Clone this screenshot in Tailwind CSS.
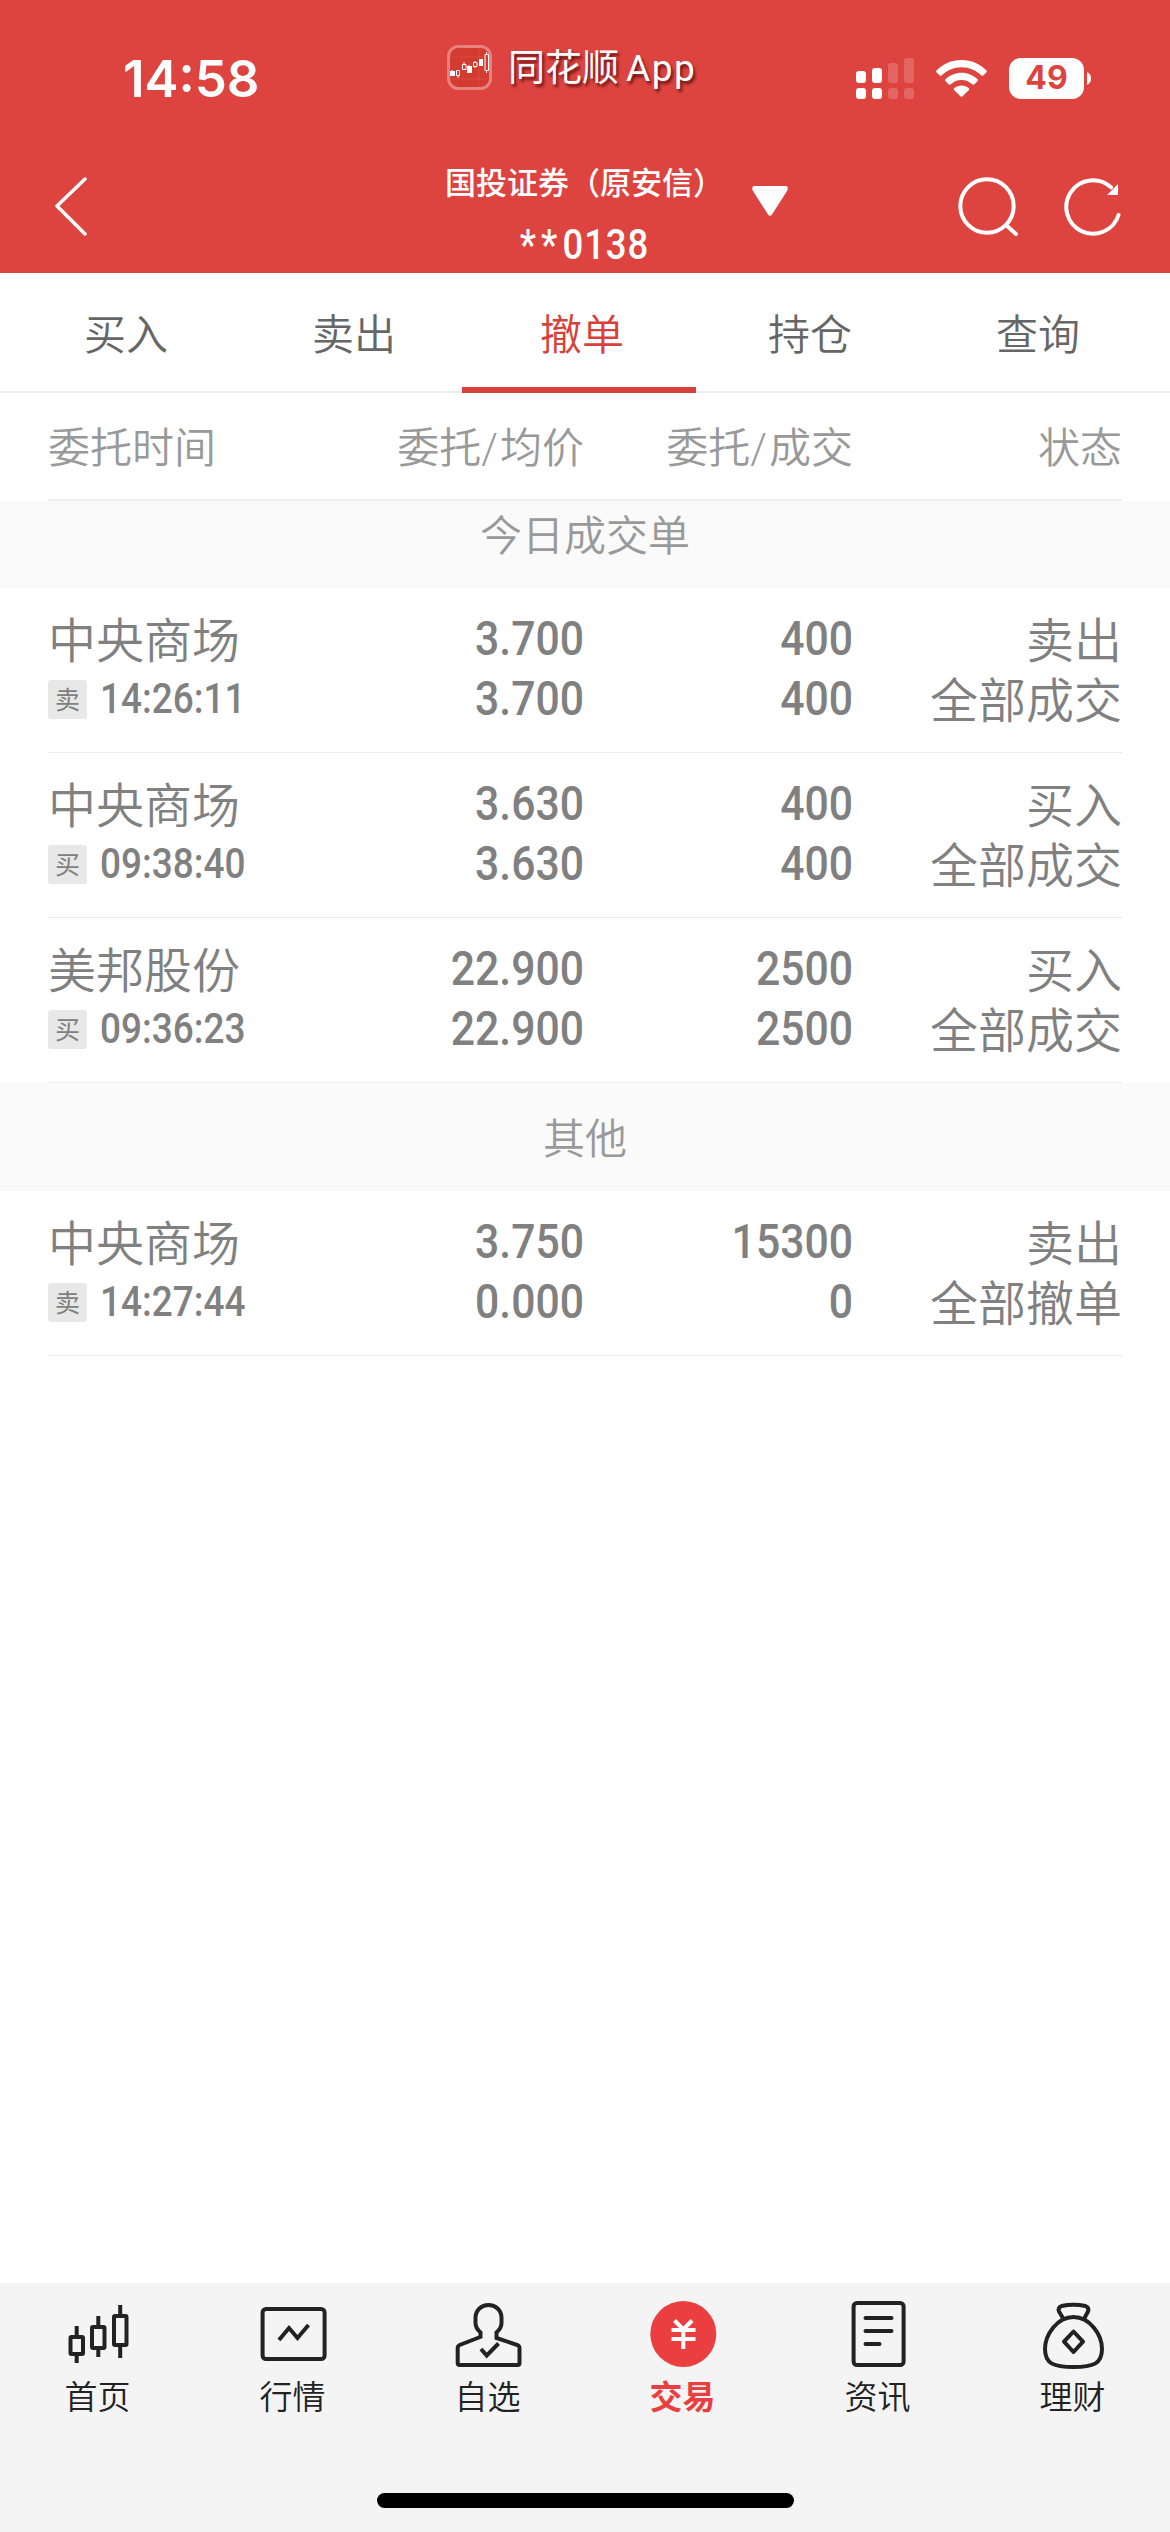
<!DOCTYPE html>
<html lang="zh-CN">
<head>
    <meta charset="UTF-8">
    <meta name="viewport" content="width=device-width, initial-scale=1.0">
    <title>撤单</title>
    <script src="https://cdn.jsdelivr.net/npm/@tailwindcss/browser@4"></script>
</head>
<body class="bg-white font-['Roboto','Noto_Sans_CJK_SC',sans-serif]">
    <div class="w-[1170px] h-[2532px] flex flex-col overflow-hidden">

        <!-- Header -->
        <header class="h-[273px] shrink-0 bg-[#dd4440] text-white flex flex-col">
            <!-- Status bar -->
            <div class="h-[156px] flex items-center pl-[123px] pr-[79px]">
                <div class="w-[324px] text-[51px] leading-none font-semibold font-['Inter',sans-serif]">14:58</div>
                <div class="flex items-center gap-[16px] -mt-[21px] w-[340px]">
                    <svg class="w-[45px] h-[45px]" viewBox="0 0 45 45" fill="none">
                        <rect x="1.5" y="1.5" width="42" height="42" rx="10" fill="#d33a30" stroke="#e8807c" stroke-width="3"/>
                        <path d="M3 12H42M3 34H42M32 3V42" stroke="#dc5048" stroke-width="0.7"/>
                        <g fill="#fff">
                            <path d="M3 26h5v5H3zM20 21h5v7H20zM32 14h4v7H32z"/>
                            <path d="M5 25v1M11 31v2M17 17v2M22 20v1M28 16v1M28 22v1M39.500 7v2M39.500 26v2" stroke="#fff"/>
                        </g>
                        <g stroke="#fff">
                            <path d="M9.500 25.500h3v5h-3zM15.500 19.500h3.500v5h-3.500zM26.500 17.500h3.500v4h-3.500zM38 9.500h3.500v16H38z"/>
                        </g>
                    </svg>
                    <div class="pt-[2px] text-[37px] leading-none whitespace-nowrap [text-shadow:2px_3px_3px_rgba(60,0,0,0.7)]">同花顺<span class="ml-[7px] tracking-[1.5px]">App</span></div>
                </div>
                <div class="flex items-center ml-auto">
                    <svg class="w-[58px] h-[41px]" viewBox="0 0 58 41" fill="#fff">
                        <rect x="0" y="13" width="10" height="12" rx="3"/>
                        <rect x="0" y="30" width="10" height="11" rx="3"/>
                        <rect x="16" y="10" width="10" height="15" rx="3"/>
                        <rect x="16" y="30" width="10" height="11" rx="3"/>
                        <g opacity=".18">
                            <rect x="32" y="5" width="10" height="20" rx="3"/>
                            <rect x="32" y="30" width="10" height="11" rx="3"/>
                            <rect x="48" y="0" width="10" height="25" rx="3"/>
                            <rect x="48" y="30" width="10" height="11" rx="3"/>
                        </g>
                    </svg>
                    <svg class="w-[51px] h-[37px] ml-[22px]" viewBox="0 0 51 37" fill="#fff">
                        <path d="M0.800 10.200C7 4 15.500 0 25.500 0s18.500 4 24.700 10.200c.8.8.8 1.700.1 2.400l-2.800 2.700c-.7.700-1.500.7-2.300 0C40 10.300 33.200 7.200 25.500 7.200S11 10.300 5.800 15.300c-.8.7-1.600.7-2.300 0L.7 12.600c-.7-.7-.7-1.600.1-2.400z"/>
                        <path d="M9.700 19C14 15.200 19.400 12.800 25.500 12.800S37 15.200 41.300 19c.8.8.8 1.600.1 2.300l-3 2.900c-.7.700-1.500.6-2.300 0-2.900-2.500-6.500-4.100-10.600-4.100s-7.700 1.600-10.600 4.100c-.8.600-1.600.7-2.300 0l-3-2.900c-.7-.7-.7-1.500.2-2.300z"/>
                        <path d="M18.400 28c2-1.600 4.400-2.500 7.100-2.500s5.100.9 7.100 2.500c.8.700.8 1.500.1 2.200l-6.100 6c-.7.700-1.500.7-2.200 0l-6.100-6c-.7-.7-.7-1.500.1-2.200z"/>
                    </svg>
                    <div class="w-[75px] h-[41px] ml-[22px] rounded-[12px] bg-white text-[#dd4440] flex items-center justify-center text-[32px] leading-none font-bold font-['Inter',sans-serif]">49</div>
                    <svg class="w-[4px] h-[13px] ml-[3px]" viewBox="0 0 4 13" fill="#fff"><path d="M0 0c2.500 1 4 3.500 4 6.500S2.500 12 0 13z"/></svg>
                </div>
            </div>
            <!-- Title bar -->
            <div class="h-[117px] flex pl-[54px] pr-[48px]">
                <svg class="w-[34px] h-[60px] mt-[20px]" viewBox="0 0 34 60" fill="none" stroke="#fff" stroke-width="3.500" stroke-linecap="round" stroke-linejoin="round">
                    <path d="M31 3L3 30l28 28"/>
                </svg>
                <div class="flex w-[345px] ml-[357px] gap-[28px]">
                    <div class="w-[279px] flex flex-col items-center">
                        <div class="mt-[5px] text-[31px] leading-[30px] h-[46px] flex items-center font-medium whitespace-nowrap">国投证券（原安信）</div>
                        <div class="mt-[15px] text-[42px] leading-[46px] font-medium tracking-[1px] scale-x-[0.87] whitespace-nowrap"><span class="tracking-[6px]">**</span>0138</div>
                    </div>
                    <svg class="w-[36px] h-[30px] mt-[30px]" viewBox="0 0 36 30" fill="#fff"><path d="M2 0h32q3 1 1 5L20 28.500q-2 2.500-4 0L1 5q-2-4 1-5z"/></svg>
                </div>
                <div class="flex gap-[46px] mt-[20px] ml-auto">
                    <svg class="w-[60px] h-[60px]" viewBox="0 0 60 60" fill="none" stroke="#fff" stroke-width="4" stroke-linecap="round">
                        <circle cx="29" cy="30" r="26.700"/>
                        <path d="M48.500 49.500L58 58"/>
                    </svg>
                    <svg class="w-[58px] h-[60px]" viewBox="0 0 58 60" fill="none" stroke="#fff" stroke-width="4" stroke-linecap="round">
                        <path d="M47 11.300A26.700 26.700 0 1 0 54.500 39"/>
                        <path d="M54 8v11H43z" fill="#fff" stroke="none"/>
                    </svg>
                </div>
            </div>
        </header>

        <!-- Tabs -->
        <nav class="h-[120px] shrink-0 border-b-2 border-[#eeeeee] pl-[12px] flex text-[42px] leading-none font-[350] text-[#666666]">
            <div class="w-[228px] pt-[42px] text-center">买入</div>
            <div class="w-[228px] pt-[42px] text-center">卖出</div>
            <div class="w-[228px] pt-[42px] text-center text-[#d8413b] relative">撤单
                <span class="absolute left-[-6px] -bottom-[2px] w-[234px] h-[6px] bg-[#d8413b]"></span>
            </div>
            <div class="w-[228px] pt-[42px] text-center">持仓</div>
            <div class="w-[228px] pt-[42px] text-center">查询</div>
        </nav>

        <!-- Column titles -->
        <div class="h-[108px] shrink-0 mx-[48px] pt-[5px] border-b-2 border-[#eeeeee] grid grid-cols-[236px_300px_269px_269px] items-center text-[42px] leading-none font-[350] text-[#999999]">
            <div>委托时间</div>
            <div class="text-right">委托<span class="tracking-[2px]">/</span>均价</div>
            <div class="text-right">委托<span class="tracking-[2px]">/</span>成交</div>
            <div class="text-right">状态</div>
        </div>

        <div class="h-[87px] shrink-0 bg-[#fafafa] pt-[15px] text-center text-[42px] leading-none font-[350] text-[#999999]">今日成交单</div>

        <!-- Orders -->
        <div class="h-[165px] shrink-0 mx-[48px] border-b border-[#ebebeb] grid grid-cols-[236px_300px_269px_269px] pt-[21px] text-[48px] leading-[60px] text-[#808080]">
            <div>
                <div class="h-[60px] pt-[3px] font-[350]">中央商场</div>
                <div class="h-[60px] flex items-center">
                    <span class="w-[39px] h-[39px] rounded-[3px] bg-[#e8e8e8] text-[25px] leading-[41px] text-center">卖</span>
                    <span class="ml-[13px] text-[42px] font-medium origin-left scale-x-[0.88]">14:26:11</span>
                </div>
            </div>
            <div class="text-right font-medium origin-right scale-x-[0.89]">3.700<br>3.700</div>
            <div class="text-right font-medium origin-right scale-x-[0.89]">400<br>400</div>
            <div class="pt-[3px] text-right font-[350]">卖出<br>全部成交</div>
        </div>

        <div class="h-[165px] shrink-0 mx-[48px] border-b border-[#ebebeb] grid grid-cols-[236px_300px_269px_269px] pt-[21px] text-[48px] leading-[60px] text-[#808080]">
            <div>
                <div class="h-[60px] pt-[3px] font-[350]">中央商场</div>
                <div class="h-[60px] flex items-center">
                    <span class="w-[39px] h-[39px] rounded-[3px] bg-[#e8e8e8] text-[25px] leading-[41px] text-center">买</span>
                    <span class="ml-[13px] text-[42px] font-medium origin-left scale-x-[0.88]">09:38:40</span>
                </div>
            </div>
            <div class="text-right font-medium origin-right scale-x-[0.89]">3.630<br>3.630</div>
            <div class="text-right font-medium origin-right scale-x-[0.89]">400<br>400</div>
            <div class="pt-[3px] text-right font-[350]">买入<br>全部成交</div>
        </div>

        <div class="h-[165px] shrink-0 mx-[48px] border-b border-[#ebebeb] grid grid-cols-[236px_300px_269px_269px] pt-[21px] text-[48px] leading-[60px] text-[#808080]">
            <div>
                <div class="h-[60px] pt-[3px] font-[350]">美邦股份</div>
                <div class="h-[60px] flex items-center">
                    <span class="w-[39px] h-[39px] rounded-[3px] bg-[#e8e8e8] text-[25px] leading-[41px] text-center">买</span>
                    <span class="ml-[13px] text-[42px] font-medium origin-left scale-x-[0.88]">09:36:23</span>
                </div>
            </div>
            <div class="text-right font-medium origin-right scale-x-[0.89]">22.900<br>22.900</div>
            <div class="text-right font-medium origin-right scale-x-[0.89]">2500<br>2500</div>
            <div class="pt-[3px] text-right font-[350]">买入<br>全部成交</div>
        </div>

        <div class="h-[108px] shrink-0 bg-[#fafafa] pt-[36px] text-center text-[42px] leading-none font-[350] text-[#999999]">其他</div>

        <div class="h-[165px] shrink-0 mx-[48px] border-b border-[#ebebeb] grid grid-cols-[236px_300px_269px_269px] pt-[21px] text-[48px] leading-[60px] text-[#808080]">
            <div>
                <div class="h-[60px] pt-[3px] font-[350]">中央商场</div>
                <div class="h-[60px] flex items-center">
                    <span class="w-[39px] h-[39px] rounded-[3px] bg-[#e8e8e8] text-[25px] leading-[41px] text-center">卖</span>
                    <span class="ml-[13px] text-[42px] font-medium origin-left scale-x-[0.88]">14:27:44</span>
                </div>
            </div>
            <div class="text-right font-medium origin-right scale-x-[0.89]">3.750<br>0.000</div>
            <div class="text-right font-medium origin-right scale-x-[0.89]">15300<br>0</div>
            <div class="pt-[3px] text-right font-[350]">卖出<br>全部撤单</div>
        </div>

        <!-- Bottom navigation -->
        <footer class="mt-auto h-[249px] shrink-0 bg-[#f4f4f4] flex flex-col items-center">
            <div class="w-full h-[210px] grid grid-cols-6 pt-[15px] text-[33px] leading-none text-[#222222]">
                <div class="flex flex-col items-center gap-[11px]">
                    <svg class="w-[72px] h-[72px]" viewBox="0 0 72 72" fill="none" stroke="#222" stroke-width="4">
                        <rect x="8.500" y="39" width="12.500" height="17" rx="1"/>
                        <rect x="30" y="29" width="12.500" height="21" rx="1"/>
                        <rect x="52" y="18" width="12.500" height="29" rx="1"/>
                        <path d="M14.700 28v10M14.700 57v8M36.300 18v10M36.300 51v8M58.200 7v10M58.200 48v12"/>
                    </svg>
                    <span class="font-[350]">首页</span>
                </div>
                <div class="flex flex-col items-center gap-[11px]">
                    <svg class="w-[72px] h-[72px]" viewBox="0 0 72 72" fill="none" stroke="#222" stroke-width="4">
                        <rect x="5.600" y="11" width="62" height="50" rx="3.500"/>
                        <path d="M22 42l10-12 8.500 10L51.500 27"/>
                    </svg>
                    <span class="font-[350]">行情</span>
                </div>
                <div class="flex flex-col items-center gap-[11px]">
                    <svg class="w-[72px] h-[72px]" viewBox="0 0 72 72" fill="none" stroke="#222" stroke-width="4">
                        <path d="M28.500 40v-5.500c-4-3.500-5-5.500-5-9.500v-5c0-8 6-13 13-13s13 5 13 13v5c0 4-1 6-5 9.500V40L65.500 47q2 1 2 3v15q0 2-2 2H7.700q-2 0-2-2V50q0-2 2-3L29.500 38.500"/>
                        <path d="M29 51l5.700 6.500L46.500 45.500"/>
                    </svg>
                    <span class="font-[350]">自选</span>
                </div>
                <div class="flex flex-col items-center gap-[11px] font-bold text-[#ea3e40]">
                    <svg class="w-[72px] h-[72px]" viewBox="0 0 72 72" fill="none" stroke="#fff" stroke-width="4">
                        <circle cx="36.300" cy="36" r="33" fill="#ea3e40" stroke="none"/>
                        <path d="M27.500 22.500l8.800 9 8.800-9M24.500 32h24M24.500 41h24M36.300 31v20"/>
                    </svg>
                    <span>交易</span>
                </div>
                <div class="flex flex-col items-center gap-[11px]">
                    <svg class="w-[72px] h-[72px]" viewBox="0 0 72 72" fill="none" stroke="#222" stroke-width="4">
                        <rect x="11.600" y="5" width="50" height="62" rx="3.500"/>
                        <path d="M23.500 20h26M23.500 33h26M23.500 46h14" stroke-linecap="round"/>
                    </svg>
                    <span class="font-[350]">资讯</span>
                </div>
                <div class="flex flex-col items-center gap-[11px]">
                    <svg class="w-[72px] h-[72px]" viewBox="0 0 72 72" fill="none" stroke="#222" stroke-width="4" stroke-linejoin="round">
                        <path d="M36.500 19C20 19 8 37 8 51c0 15 9 18 28.500 18S65 66 65 51C65 37 53 19 36.500 19z"/>
                        <path d="M26.500 21l-4.500-7.500q-1.500-4 2.500-5.500 12-2.500 24 0 4 1.500 2.500 5.500L47 21"/>
                        <path d="M36.500 33.500l9.500 10.200-9.500 10.300-9.500-10.300z"/>
                    </svg>
                    <span class="font-[350]">理财</span>
                </div>
            </div>
            <div class="w-[417px] h-[15px] rounded-full bg-black"></div>
        </footer>
    </div>
</body>
</html>
